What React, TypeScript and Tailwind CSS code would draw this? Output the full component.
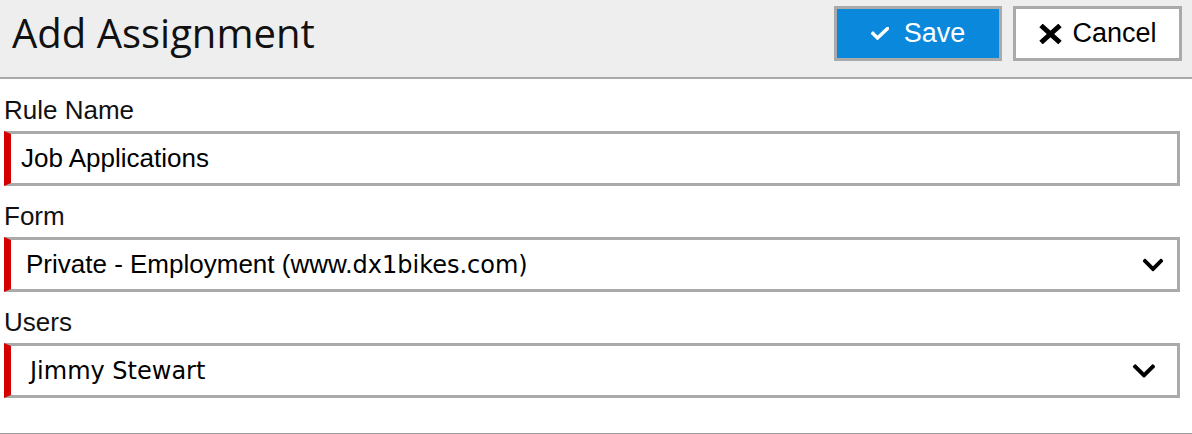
import { FaChevronDown } from "react-icons/fa";

const arial = "font-['Liberation_Sans',Arial,sans-serif]";
const dejavu = "font-['DejaVu_Sans',sans-serif]";

const CheckIcon = () => (
	<svg width="18" height="13" viewBox="0 0 18 13" fill="none">
		<polyline points="2,6.5 6.5,11 16.5,1.5" stroke="white" strokeWidth="3.4" strokeLinecap="square" />
	</svg>
);

const CrossIcon = () => (
	<svg width="25" height="20" viewBox="0 0 25 20" fill="none">
		<line x1="3" y1="1.5" x2="22" y2="18.5" stroke="black" strokeWidth="5" />
		<line x1="22" y1="1.5" x2="3" y2="18.5" stroke="black" strokeWidth="5" />
	</svg>
);

const Field = ({ label, children }: { label: string; children: React.ReactNode }) => {
	return (
		<div className="mb-[15px]">
			<label className={`block ${arial} text-[26px] leading-[30px] text-[#111] mb-[6px]`}>{label}</label>
			{children}
		</div>
	);
};

const App = () => {
	return (
		<div className="w-[1192px] h-[434px] bg-white overflow-hidden">
			<header className="h-[79px] bg-[#eeeeee] border-b-2 border-[#a9a9a9] flex items-start justify-between pl-3 pr-[10px] pt-[5px]">
				<h1 className="font-['Open_Sans',sans-serif] text-[40px] leading-[55px] text-[#111] font-normal">
					Add Assignment
				</h1>
				<div className="flex gap-x-[11px] mt-px">
					<button className={`w-[168px] h-[55px] border-[3px] border-[#aaaaaa] bg-[#0a88dc] text-white flex items-center justify-center gap-x-[15px] ${arial} text-[27px]`}>
						<CheckIcon />
						<span>Save</span>
					</button>
					<button className={`w-[169px] h-[55px] border-[3px] border-[#aaaaaa] bg-white text-black flex items-center justify-center gap-x-[9px] ${arial} text-[27px]`}>
						<CrossIcon />
						<span>Cancel</span>
					</button>
				</div>
			</header>
			<div className="pt-4 pl-[4px] pr-[12px]">
				<Field label="Rule Name">
					<div className={`h-[55px] border-[3px] border-[#aaaaaa] border-l-[7px] border-l-[#d40000] flex items-center pl-[10px] ${arial} text-[26px] text-black`}>
						Job Applications
					</div>
				</Field>
				<Field label="Form">
					<div className="h-[55px] border-[3px] border-[#aaaaaa] border-l-[7px] border-l-[#d40000] flex items-center justify-between pl-[15px] pr-[12px] text-black">
						<span className="whitespace-nowrap">
							<span className={`${arial} text-[26px]`}>Private - Employment (www.</span>
							<span className={`${dejavu} text-[24px]`}>dx1bikes.com)</span>
						</span>
						<FaChevronDown size={24} />
					</div>
				</Field>
				<Field label="Users">
					<div className="h-[55px] border-[3px] border-[#aaaaaa] border-l-[7px] border-l-[#d40000] flex items-center justify-between pl-[19px] pr-[20px] text-black">
						<span className={`${dejavu} text-[24px]`}>Jimmy Stewart</span>
						<FaChevronDown size={26} />
					</div>
				</Field>
			</div>
			<div className="mt-[35px] border-t border-[#999999]" />
		</div>
	);
};

export default App;
